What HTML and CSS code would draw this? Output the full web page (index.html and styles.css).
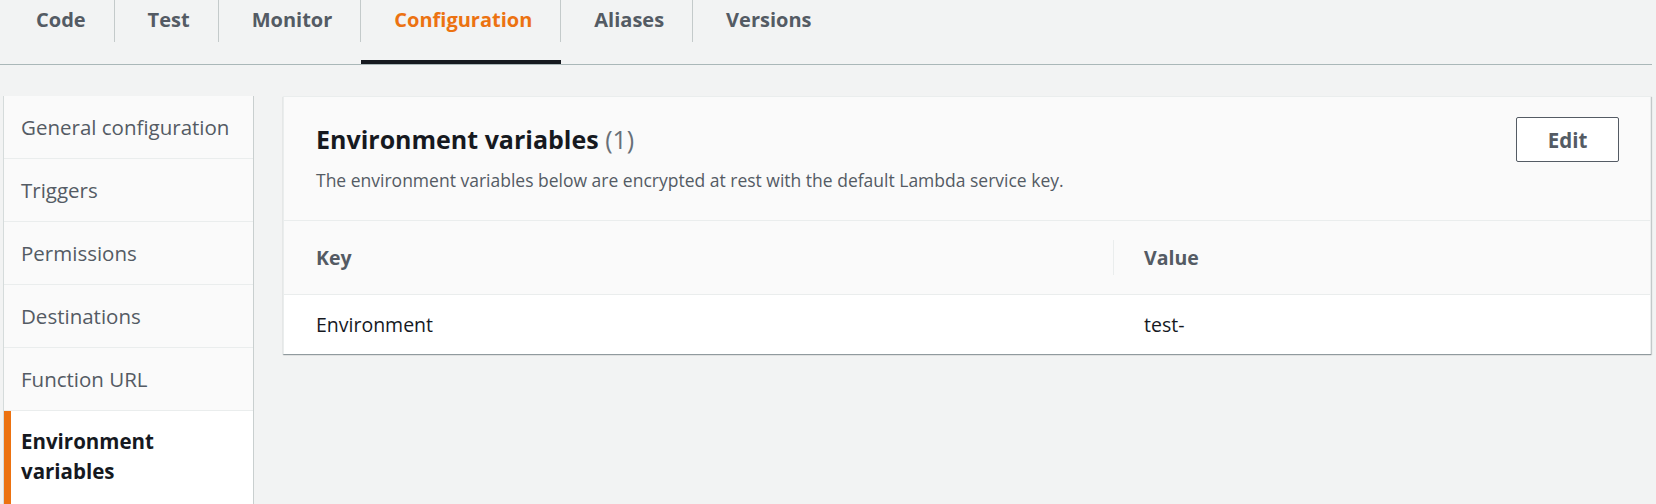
FILE: index.html
```html
<!DOCTYPE html>
<html lang="en">
<head>
<meta charset="utf-8">
<title>Configuration - Environment variables</title>
<link rel="stylesheet" href="styles.css">
</head>
<body>
<nav class="tabs">
  <div class="tab first"><span class="tab-label">Code</span></div>
  <div class="tab"><span class="tab-label">Test</span></div>
  <div class="tab"><span class="tab-label">Monitor</span></div>
  <div class="tab active"><span class="tab-label">Configuration</span></div>
  <div class="tab"><span class="tab-label">Aliases</span></div>
  <div class="tab last"><span class="tab-label">Versions</span></div>
</nav>
<div class="content">
  <aside class="sidebar">
    <div class="side-item">General configuration</div>
    <div class="side-item">Triggers</div>
    <div class="side-item">Permissions</div>
    <div class="side-item">Destinations</div>
    <div class="side-item">Function URL</div>
    <div class="side-item active">Environment<br>variables</div>
  </aside>
  <section class="panel">
    <header class="panel-header">
      <div class="header-text">
        <h2 class="title">Environment variables <span class="count">(1)</span></h2>
        <p class="desc">The environment variables below are encrypted at rest with the default Lambda service key.</p>
      </div>
      <button class="btn">Edit</button>
    </header>
    <div class="table">
      <div class="th key"><span>Key</span></div>
      <div class="th value"><span class="divider"></span><span>Value</span></div>
      <div class="td key">Environment</div>
      <div class="td value">test-</div>
    </div>
  </section>
</div>
</body>
</html>
```
FILE: styles.css
```css
* { box-sizing: border-box; }
html, body { margin: 0; padding: 0; }
body {
  background: #f2f3f3;
  font-family: "Open Sans", "Liberation Sans", sans-serif;
  color: #16191f;
  width: 1656px;
  height: 504px;
  overflow: hidden;
}
.tabs {
  display: flex;
  height: 65px;
  border-bottom: 1px solid #aab7b8;
  margin-right: 4px;
}
.tab {
  height: 64px;
  display: flex;
  align-items: flex-start;
  border-bottom: 4px solid transparent;
}
.tab.active { border-bottom-color: #16191f; }
.tab-label {
  height: 42px;
  display: flex;
  align-items: center;
  padding: 0 28px 3px 33px;
  border-right: 1px solid #c4caca;
  font-size: 20px;
  font-weight: 700;
  color: #545b64;
}
.tab.first .tab-label { padding-left: 36px; }
.tab.last .tab-label { border-right: none; }
.tab.active .tab-label { color: #ec7211; }
.content {
  display: flex;
  align-items: flex-start;
  padding: 31px 5px 0 3px;
  gap: 29px;
}
.sidebar {
  width: 251px;
  flex: none;
  background: #fafafa;
  border-left: 1px solid #d5dbdb;
  border-right: 1px solid #c9cfcf;
  height: 420px;
}
.side-item {
  padding: 16px 17px;
  line-height: 30px;
  font-size: 20.5px;
  color: #545b64;
  border-bottom: 1px solid #eaeded;
  white-space: nowrap;
}
.side-item.active {
  background: #fff;
  color: #16191f;
  font-weight: 700;
  border-left: 7px solid #ec7211;
  padding-left: 10px;
  padding-top: 15px;
  border-bottom: none;
  height: 100px;
}
.panel {
  flex: 1;
  background: #fff;
  border: 1px solid #eaeded;
  border-bottom: none;
  box-shadow: 0 1px 1px 0 rgba(0, 28, 36, 0.3), 1px 1px 1px 0 rgba(0, 28, 36, 0.15);
}
.panel-header {
  display: flex;
  justify-content: space-between;
  align-items: flex-start;
  background: #fafafa;
  padding: 20px 31px 28px 32px;
  border-bottom: 1px solid #eaeded;
}
.header-text { padding-top: 4px; }
.title {
  margin: 0;
  font-size: 25px;
  line-height: 36px;
  font-weight: 700;
  color: #16191f;
}
.count { font-weight: 400; color: #687078; }
.desc {
  margin: 11px 0 0;
  font-size: 17.5px;
  line-height: 24px;
  color: #545b64;
}
.btn {
  width: 103px;
  height: 45px;
  background: #fff;
  border: 1px solid #545b64;
  border-radius: 2px;
  font-family: inherit;
  font-size: 20.5px;
  font-weight: 700;
  color: #545b64;
  padding: 0;
}
.table {
  display: grid;
  grid-template-columns: 829px 1fr;
}
.th {
  height: 74px;
  background: #fafafa;
  border-bottom: 1px solid #eaeded;
  display: flex;
  align-items: center;
  font-size: 19.5px;
  font-weight: 700;
  color: #545b64;
}
.th.key, .td.key { padding-left: 32px; }
.th.value { gap: 30px; }
.divider {
  width: 1px;
  height: 35px;
  background: #eaeded;
}
.td {
  height: 59px;
  display: flex;
  align-items: center;
  font-size: 19.5px;
  color: #16191f;
}
.td.value { padding-left: 31px; }
```
